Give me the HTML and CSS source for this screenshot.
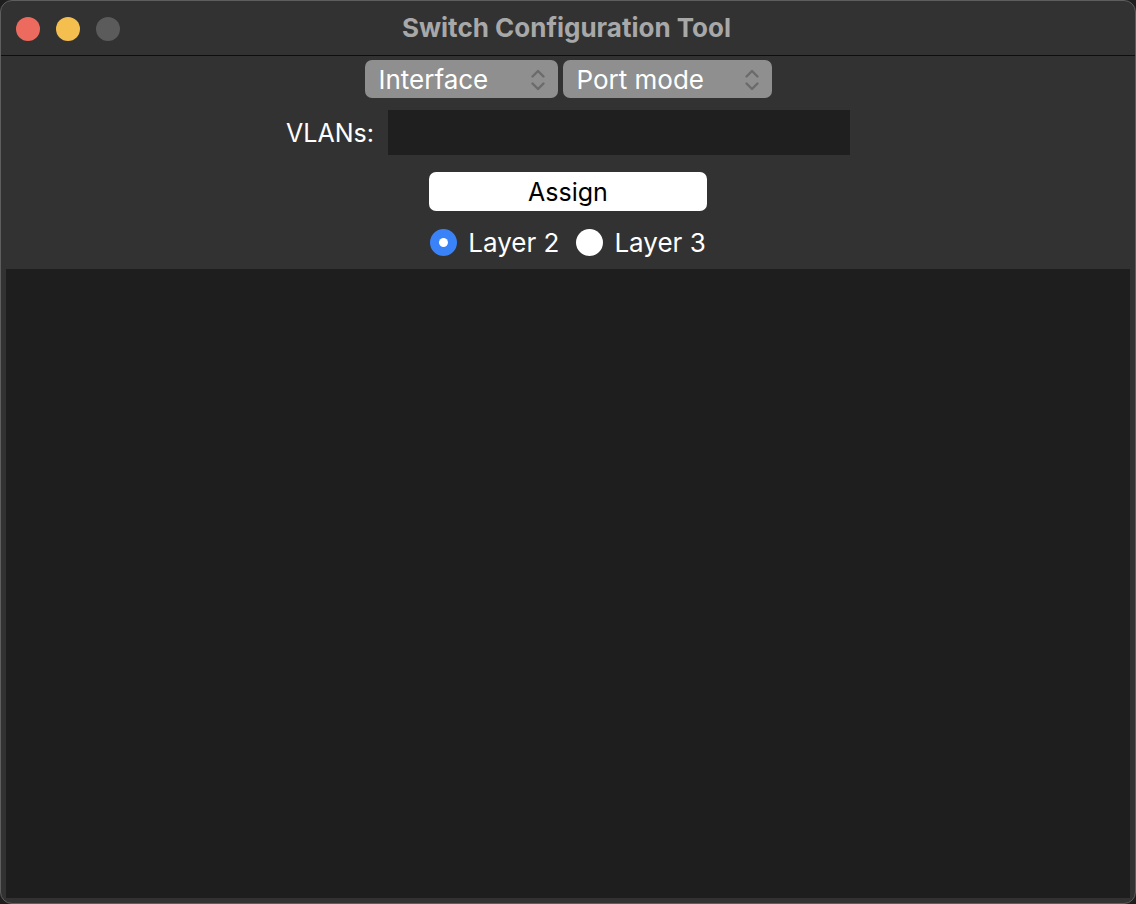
FILE: index.html
```html
<!DOCTYPE html>
<html>
<head>
<meta charset="utf-8">
<link rel="stylesheet" href="styles.css">
</head>
<body>
<div class="window">
  <div class="titlebar">
    <div class="lights">
      <span class="light red"></span>
      <span class="light yellow"></span>
      <span class="light gray"></span>
    </div>
    <div class="title">Switch Configuration Tool</div>
  </div>
  <div class="controls">
    <div class="row popups">
      <div class="popup popup-interface">
        <span>Interface</span>
        <svg class="chev" width="16" height="24" viewBox="0 0 16 24"><path d="M2.5 8.5 L8 3 L13.5 8.5 M2.5 15.5 L8 21 L13.5 15.5" fill="none" stroke="#6b6b6b" stroke-width="2.4" stroke-linecap="round" stroke-linejoin="round"/></svg>
      </div>
      <div class="popup popup-mode">
        <span>Port mode</span>
        <svg class="chev" width="16" height="24" viewBox="0 0 16 24"><path d="M2.5 8.5 L8 3 L13.5 8.5 M2.5 15.5 L8 21 L13.5 15.5" fill="none" stroke="#6b6b6b" stroke-width="2.4" stroke-linecap="round" stroke-linejoin="round"/></svg>
      </div>
    </div>
    <div class="row vlans">
      <label class="vlan-label">VLANs:</label>
      <div class="field"></div>
    </div>
    <div class="row">
      <div class="button">Assign</div>
    </div>
    <div class="row radios">
      <div class="radio-item"><span class="radio on"></span><span class="radio-label">Layer 2</span></div>
      <div class="radio-item"><span class="radio"></span><span class="radio-label">Layer 3</span></div>
    </div>
  </div>
  <div class="content"></div>
</div>
</body>
</html>
```

FILE: styles.css
```css
html, body {
  margin: 0;
  padding: 0;
  background: #1e1e1e;
}
body {
  font-family: Inter, "Liberation Sans", sans-serif;
}
.window {
  box-sizing: border-box;
  width: 1136px;
  height: 904px;
  background: #323232;
  border: 1px solid #5e5e5e;
  border-radius: 12px;
  overflow: hidden;
  display: flex;
  flex-direction: column;
}
.titlebar {
  height: 54px;
  border-bottom: 1px solid #0e0e0e;
  display: flex;
  align-items: center;
  position: relative;
  flex-shrink: 0;
}
.lights {
  display: flex;
  gap: 16px;
  padding-left: 15px;
  padding-top: 1px;
}
.light {
  width: 24px;
  height: 24px;
  border-radius: 50%;
  display: block;
}
.red { background: #ed6a5e; }
.yellow { background: #f5bf4f; }
.gray { background: #5b5b5b; }
.title {
  position: absolute;
  left: 0;
  right: 0;
  top: 0;
  height: 54px;
  line-height: 54px;
  text-align: center;
  font-weight: 700;
  font-size: 26px;
  color: #a8a8a8;
  pointer-events: none;
  padding-right: 3px;
}
.controls {
  display: flex;
  flex-direction: column;
  align-items: center;
  padding-top: 4px;
  flex-shrink: 0;
}
.row {
  display: flex;
  align-items: center;
  justify-content: center;
}
.popups {
  gap: 5px;
  height: 38px;
}
.popup {
  box-sizing: border-box;
  height: 38px;
  background: #8f8f8f;
  border-radius: 7px;
  display: flex;
  align-items: center;
  justify-content: space-between;
  padding: 1px 12px 0 14px;
  color: #ffffff;
  font-size: 26px;
}
.popup-interface { width: 193px; }
.popup-mode { width: 209px; }
.chev { display: block; }
.vlans {
  margin-top: 12px;
  gap: 14px;
  height: 45px;
}
.vlan-label {
  color: #ffffff;
  font-size: 25px;
}
.field {
  width: 462px;
  height: 45px;
  background: #1f1f1f;
}
.button {
  margin-top: 17px;
  width: 278px;
  height: 39px;
  background: #ffffff;
  border-radius: 7px;
  color: #000000;
  font-size: 25px;
  display: flex;
  align-items: center;
  justify-content: center;
}
.radios {
  margin-top: 18px;
  height: 27px;
  gap: 17px;
}
.radio-item {
  display: flex;
  align-items: center;
  gap: 11px;
}
.radio {
  box-sizing: border-box;
  width: 27px;
  height: 27px;
  border-radius: 50%;
  background: #ffffff;
  display: block;
}
.radio.on {
  background: #3a82f7;
  border: 9px solid #3a82f7;
  background-clip: padding-box;
  position: relative;
}
.radio.on::after {
  content: "";
  position: absolute;
  inset: 0;
  border-radius: 50%;
  background: #ffffff;
}
.radio-label {
  color: #ffffff;
  font-size: 26px;
}
.content {
  flex: 1;
  margin: 13px 5px 5px 5px;
  background: #1e1e1e;
}
```
